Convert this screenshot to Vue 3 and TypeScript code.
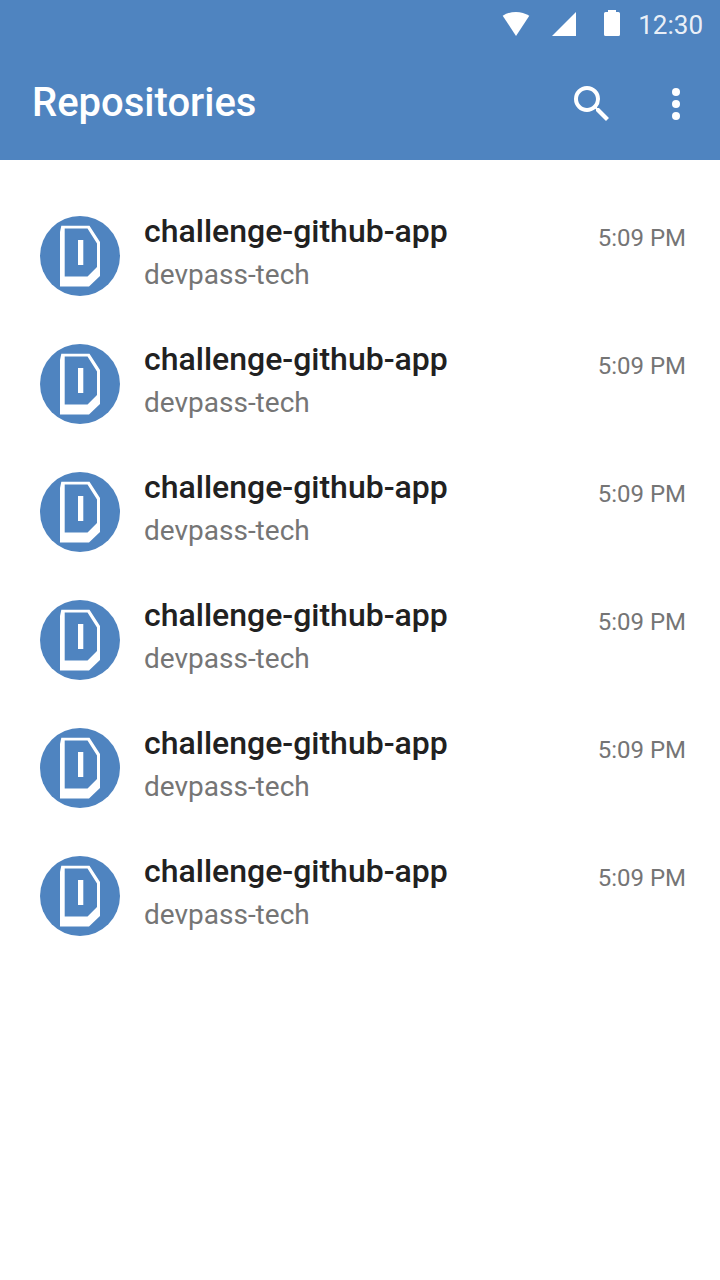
<script setup lang="ts">
interface Repository {
  id: number
  name: string
  owner: string
  time: string
}

const repositories: Repository[] = Array.from({ length: 6 }, (_, id) => ({
  id,
  name: 'challenge-github-app',
  owner: 'devpass-tech',
  time: '5:09 PM',
}))
</script>

<template>
  <div class="screen">
    <header class="header">
      <div class="status-bar">
        <svg class="status-icons" width="120" height="48" viewBox="0 0 120 48" fill="#fff">
          <path d="M2.7 15.7C10.6 10.6 21.4 10.6 29.3 15.7L16 36Z" />
          <path d="M52 36H76V12Z" />
          <path d="M108 10h8v2h2.400q1.600 0 1.600 1.600v20.800q0 1.600-1.600 1.600h-12.800q-1.600 0-1.600-1.600v-20.800q0-1.600 1.600-1.600h2.400z" />
        </svg>
        <span class="clock">12:30</span>
      </div>
      <div class="toolbar">
        <h1 class="title">Repositories</h1>
        <button class="action" aria-label="Search">
          <svg width="48" height="48" viewBox="0 0 24 24" fill="#fff">
            <path d="M15.500 14h-.79l-.28-.27A6.471 6.471 0 0 0 16 9.500 6.500 6.500 0 1 0 9.500 16c1.610 0 3.090-.59 4.230-1.570l.27.28v.79l5 4.990L20.490 19l-4.990-5zm-6 0C7.010 14 5 11.990 5 9.500S7.010 5 9.500 5 14 7.010 14 9.500 11.990 14 9.500 14z" />
          </svg>
        </button>
        <button class="action" aria-label="More options">
          <svg width="48" height="48" viewBox="0 0 24 24" fill="#fff">
            <circle cx="12" cy="6" r="2" />
            <circle cx="12" cy="12" r="2" />
            <circle cx="12" cy="18" r="2" />
          </svg>
        </button>
      </div>
    </header>
    <ul class="list">
      <li v-for="repo in repositories" :key="repo.id" class="row">
        <svg class="avatar" width="80" height="80" viewBox="0 0 80 80">
          <circle cx="40" cy="40" r="40" fill="#4f84c0" />
          <path
            fill="#fff"
            fill-rule="evenodd"
            d="M21.300 9.700H49.500L60 26V60L49 70.400H20V16ZM24.700 12.600V60.600H47.500L57 51V27.500L47.500 12.600ZM38 24H43.300V49H38Z"
          />
        </svg>
        <div class="details">
          <span class="name">{{ repo.name }}</span>
          <span class="owner">{{ repo.owner }}</span>
        </div>
        <time class="time">{{ repo.time }}</time>
      </li>
    </ul>
  </div>
</template>

<style>
body {
  margin: 0;
  background: #fff;
}
</style>

<style scoped>
.screen {
  width: 720px;
  height: 1280px;
  overflow: hidden;
  background: #fff;
  font-family: Roboto, sans-serif;
}
.header {
  height: 160px;
  background: #4f84c0;
  color: #fff;
}
.status-bar {
  display: flex;
  justify-content: flex-end;
  height: 48px;
  padding-right: 17px;
}
.status-icons {
  margin-right: 18px;
}
.clock {
  font-size: 26px;
  line-height: 50px;
  color: rgba(255, 255, 255, 0.9);
}
.toolbar {
  display: flex;
  align-items: center;
  height: 112px;
  padding: 0 20px 0 32px;
}
.title {
  flex: 1;
  margin: 0 0 2px;
  font-size: 40px;
  font-weight: 500;
  line-height: 48px;
}
.action {
  display: flex;
  margin: 0 0 0 36px;
  padding: 0;
  border: 0;
  background: none;
}
.list {
  margin: 0;
  padding: 32px 0 0;
  list-style: none;
}
.row {
  display: flex;
  height: 104px;
  padding: 24px 34px 0 40px;
}
.avatar {
  margin-right: 24px;
}
.details {
  display: flex;
  flex: 1;
  flex-direction: column;
}
.name {
  font-size: 32px;
  font-weight: 500;
  line-height: 30px;
  color: #212121;
}
.owner {
  margin-top: 13px;
  font-size: 28px;
  line-height: 32px;
  color: #757575;
}
.time {
  margin-top: 6px;
  font-size: 24px;
  line-height: 32px;
  color: #757575;
}
</style>
